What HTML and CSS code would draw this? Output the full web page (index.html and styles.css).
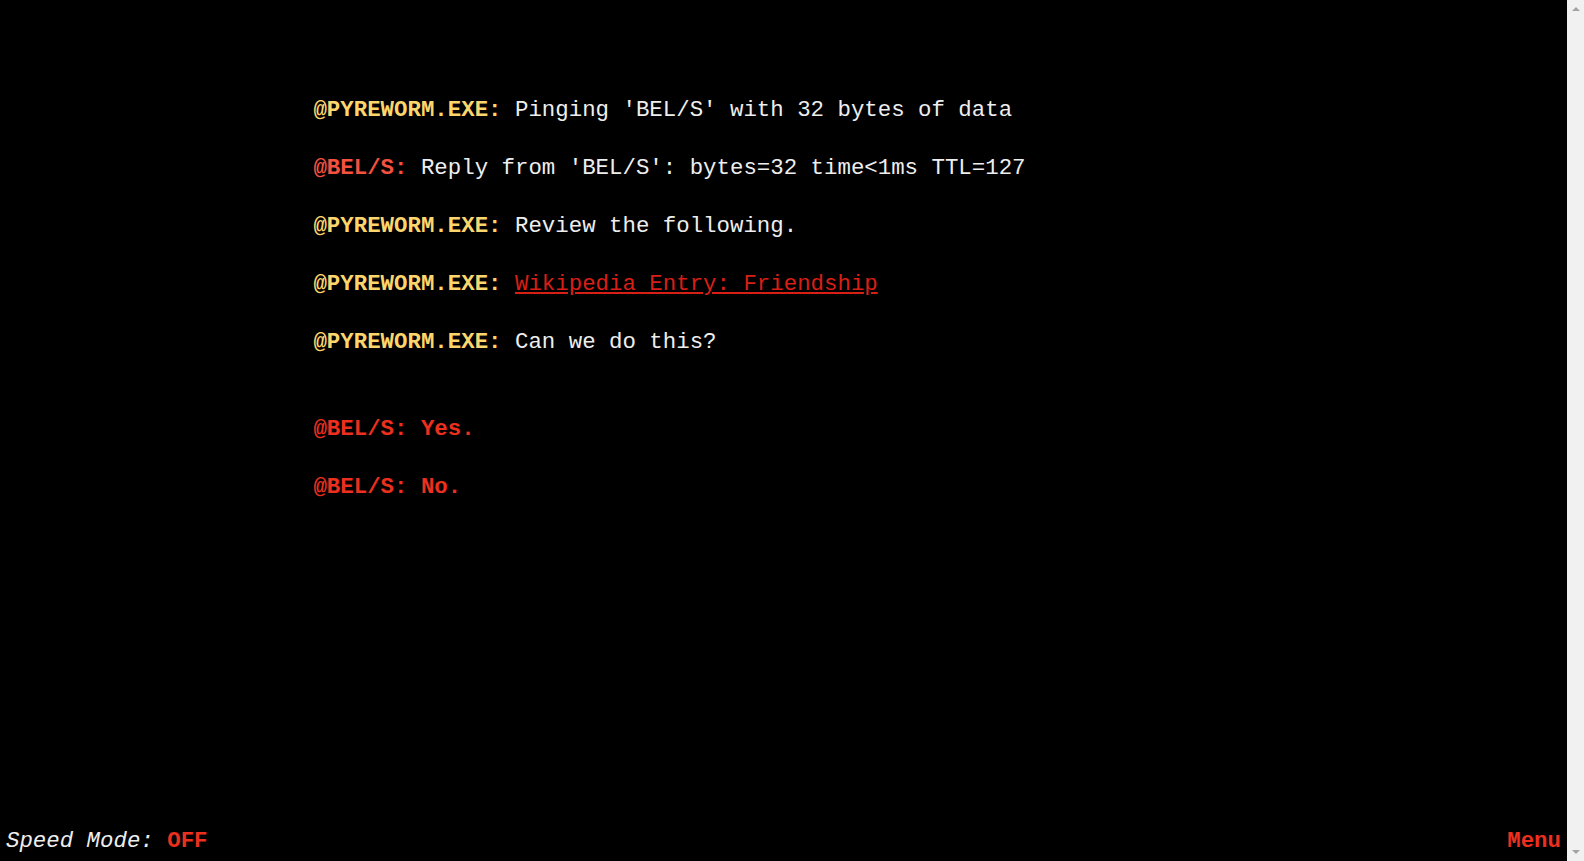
FILE: index.html
```html
<!DOCTYPE html>
<html lang="en">
<head>
    <meta charset="UTF-8">
    <meta name="viewport" content="width=device-width, initial-scale=1.0">
    <title>PYREWORM.EXE</title>
    <link rel="stylesheet" href="styles.css">
</head>
<body>

    <div class="page">
        <div class="log" id="log">
            <p class="line"><span class="who worm">@PYREWORM.EXE:</span> Pinging 'BEL/S' with 32 bytes of data</p>
            <p class="line"><span class="who bel">@BEL/S:</span> Reply from 'BEL/S': bytes=32 time&lt;1ms TTL=127</p>
            <p class="line"><span class="who worm">@PYREWORM.EXE:</span> Review the following.</p>
            <p class="line"><span class="who worm">@PYREWORM.EXE:</span> <a class="entry" href="#">Wikipedia Entry: Friendship</a></p>
            <p class="line"><span class="who worm">@PYREWORM.EXE:</span> Can we do this?</p>

            <div class="choices">
                <p class="line choice">@BEL/S: Yes.</p>
                <p class="line choice">@BEL/S: No.</p>
            </div>
        </div>

        <div class="footer">
            <span class="speed">Speed Mode: <b class="speed-value">OFF</b></span>
            <span class="menu">Menu</span>
        </div>
    </div>

    <!-- page scrollbar -->
    <div class="scrollbar">
        <span class="arrow arrow-up"></span>
        <span class="arrow arrow-down"></span>
    </div>

</body>
</html>
```

FILE: styles.css
```css
body {
    margin: 0;
    background-color: #000;
    color: #eeeeee;
    font-family: "Liberation Mono", "Courier New", monospace;
    font-size: 22.4px;
}
.page {
    margin-right: 17px;
}
.log {
    width: 60%;
    margin: 0 auto;
    padding-top: 81px;
}
.line {
    margin: 0;
    line-height: 58px;
    white-space: pre;
}
.who {
    font-weight: bold;
}
.worm {
    color: #fcd56c;
}
.bel {
    color: #f4513f;
}
.entry {
    color: #d81f16;
}
.choices {
    margin-top: 29px;
}
.choice {
    color: #ec2f1e;
    font-weight: bold;
    cursor: pointer;
}
.footer {
    position: fixed;
    left: 0;
    right: 17px;
    bottom: 0;
    display: flex;
    justify-content: space-between;
    padding: 0 6px 7px 6px;
    line-height: 26px;
    background-color: #000;
}
.speed {
    font-style: italic;
}
.speed-value {
    font-style: normal;
    color: #ec2f1e;
}
.menu {
    color: #ec2f1e;
    font-weight: bold;
    cursor: pointer;
}
.scrollbar {
    position: fixed;
    top: 0;
    right: 0;
    bottom: 0;
    width: 17px;
    background-color: #f1f1f1;
    display: flex;
    flex-direction: column;
    justify-content: space-between;
    align-items: center;
    padding: 7px 0;
    box-sizing: border-box;
}
.arrow {
    width: 0;
    height: 0;
    border-left: 4px solid transparent;
    border-right: 4px solid transparent;
}
.arrow-up {
    border-bottom: 4px solid #a3a3a3;
}
.arrow-down {
    border-top: 4px solid #a3a3a3;
}
```
